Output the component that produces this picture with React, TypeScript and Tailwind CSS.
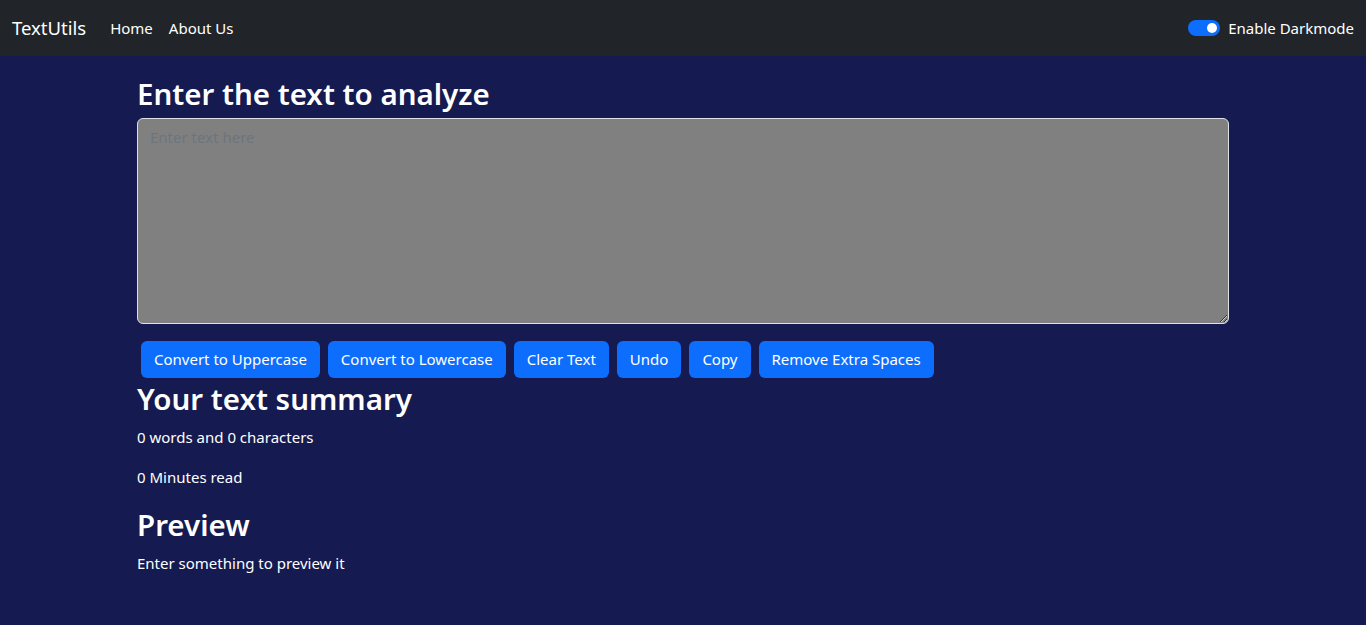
import React, { useState } from "react";

const buttons = [
  "Convert to Uppercase",
  "Convert to Lowercase",
  "Clear Text",
  "Undo",
  "Copy",
  "Remove Extra Spaces",
];

const App: React.FC = () => {
  const [text, setText] = useState("");
  const words = text.split(/\s+/).filter((w) => w.length > 0).length;

  return (
    <div className="min-h-screen bg-[#151b50] font-['Noto_Sans',sans-serif] text-white">
      <nav className="flex h-14 items-center justify-between bg-[#212529] px-3">
        <div className="flex items-center">
          <span className="mr-4 text-[18.5px] text-white">TextUtils</span>
          <a className="px-2 text-[15px] text-white" href="#">
            Home
          </a>
          <a className="px-2 text-[15px] text-white" href="#">
            About Us
          </a>
        </div>
        <label className="flex items-center gap-2">
          <span className="relative h-4 w-8 rounded-full bg-[#0d6efd]">
            <span className="absolute right-[3px] top-[3px] h-2.5 w-2.5 rounded-full bg-white" />
          </span>
          <span className="text-[15px]">Enable Darkmode</span>
        </label>
      </nav>

      <div className="mx-auto w-[1092px] pt-5">
        <h2 className="mb-1.5 text-[29.5px] font-semibold leading-[36px]">
          Enter the text to analyze
        </h2>
        <textarea
          value={text}
          onChange={(e) => setText(e.target.value)}
          placeholder="Enter text here"
          className="block h-[206px] w-full rounded-md border border-[#dee2e6] bg-[#808080] px-3 py-1.5 text-[15px] leading-6 text-white placeholder:text-[#6c757d] outline-none"
        />
        <div className="mt-[17px] flex gap-2 px-1">
          {buttons.map((b) => (
            <button
              key={b}
              className="h-[37px] rounded-md bg-[#0d6efd] px-[13px] text-[15px] text-white"
            >
              {b}
            </button>
          ))}
        </div>

        <h2 className="mt-[3px] mb-2 text-[29.5px] font-semibold leading-[36px]">
          Your text summary
        </h2>
        <p className="mb-4 text-[15px] leading-6">
          {words} words and {text.length} characters
        </p>
        <p className="mb-[18px] text-[15px] leading-6">
          {0.008 * words} Minutes read
        </p>
        <h2 className="mb-2 text-[29.5px] font-semibold leading-[36px]">
          Preview
        </h2>
        <p className="text-[15px] leading-6">
          {text.length > 0 ? text : "Enter something to preview it"}
        </p>
      </div>
    </div>
  );
};

export default App;
